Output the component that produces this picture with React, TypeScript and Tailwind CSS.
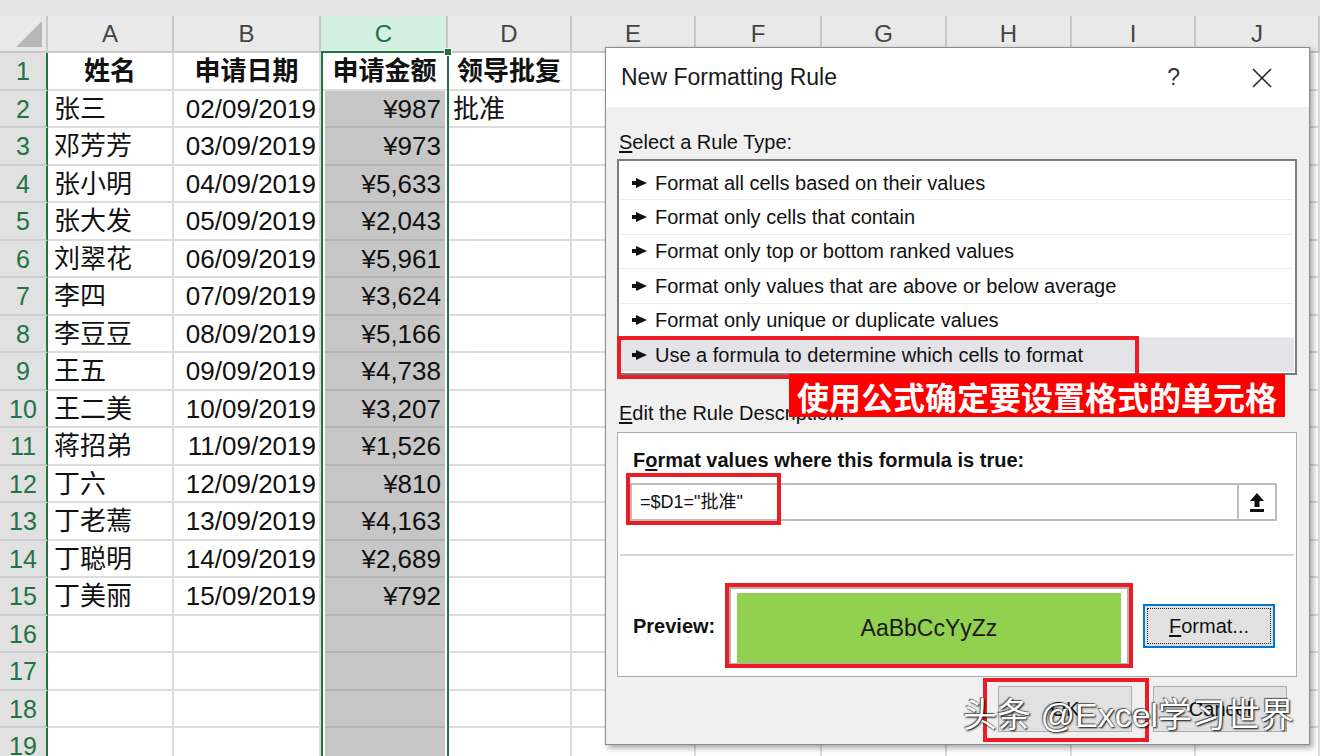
import React from 'react';

const rowsData = [
  ['张三', '02/09/2019', '¥987', '批准'],
  ['邓芳芳', '03/09/2019', '¥973', ''],
  ['张小明', '04/09/2019', '¥5,633', ''],
  ['张大发', '05/09/2019', '¥2,043', ''],
  ['刘翠花', '06/09/2019', '¥5,961', ''],
  ['李四', '07/09/2019', '¥3,624', ''],
  ['李豆豆', '08/09/2019', '¥5,166', ''],
  ['王五', '09/09/2019', '¥4,738', ''],
  ['王二美', '10/09/2019', '¥3,207', ''],
  ['蒋招弟', '11/09/2019', '¥1,526', ''],
  ['丁六', '12/09/2019', '¥810', ''],
  ['丁老蔫', '13/09/2019', '¥4,163', ''],
  ['丁聪明', '14/09/2019', '¥2,689', ''],
  ['丁美丽', '15/09/2019', '¥792', ''],
];

const restCols = ['w-[124px]', 'w-[126px]', 'w-[125px]', 'w-[125px]', 'w-[124px]', 'w-[124px]'];
const restLetters = ['E', 'F', 'G', 'H', 'I', 'J'];

const ruleTypes = [
  'Format all cells based on their values',
  'Format only cells that contain',
  'Format only top or bottom ranked values',
  'Format only values that are above or below average',
  'Format only unique or duplicate values',
  'Use a formula to determine which cells to format',
];

const Arrow = () => (
  <svg width="15" height="10" viewBox="0 0 15 10" className="shrink-0">
    <rect x="0" y="3" width="5" height="4" fill="#111" />
    <polygon points="4,0 15,5 4,10" fill="#111" />
  </svg>
);

const cell = 'h-full flex items-center pt-[2px] border-r-2 border-b-2 border-[#dcdcdc] text-[26px] text-[#111] tabular-nums';

const App = () => {
  return (
    <div className="relative w-[1320px] h-[756px] overflow-hidden bg-white font-['Liberation_Sans','Noto_Sans_CJK_SC',sans-serif]">
      {/* top strip */}
      <div className="h-[16px] bg-[#e6e6e6]" />

      {/* column headers */}
      <div className="flex h-[37px] bg-[#e9e9e9] text-[24px] text-[#444]">
        <div className="w-[48px] h-full relative border-r-2 border-b-2 border-[#c8c8c8]">
          <svg width="26" height="26" viewBox="0 0 26 26" className="absolute right-[4px] bottom-[4px]">
            <polygon points="26,0 26,26 0,26" fill="#b7b7b7" />
          </svg>
        </div>
        <div className="w-[126px] h-full flex items-center justify-center border-r-2 border-b-2 border-[#c8c8c8]">A</div>
        <div className="w-[147px] h-full flex items-center justify-center border-r-2 border-b-2 border-[#c8c8c8]">B</div>
        <div className="w-[127px] h-full flex items-center justify-center bg-[#d3f0e0] text-[#217346] border-r-2 border-[#c8c8c8] border-b-2 border-b-[#217346]">C</div>
        <div className="w-[124px] h-full flex items-center justify-center border-r-2 border-b-2 border-[#c8c8c8]">D</div>
        {restCols.map((w, i) => (
          <div key={i} className={`${w} h-full flex items-center justify-center border-r-2 border-b-2 border-[#c8c8c8]`}>
            {restLetters[i]}
          </div>
        ))}
      </div>

      {/* rows */}
      {Array.from({ length: 19 }).map((_, i) => {
        const r = i + 1;
        const d = r >= 2 && r <= 15 ? rowsData[r - 2] : null;
        return (
          <div key={r} className="flex h-[37.5px]">
            <div className="w-[48px] h-full flex items-center justify-center pt-[2px] bg-[#e1e1e1] text-[#217346] text-[25px] border-r-2 border-r-[#217346] border-b-2 border-b-[#cdcdcd]">
              {r}
            </div>
            <div className={`w-[126px] ${cell} ${r === 1 ? 'justify-center font-bold' : 'pl-[6px]'}`}>
              {r === 1 ? '姓名' : d?.[0]}
            </div>
            <div className={`w-[147px] ${cell} ${r === 1 ? 'justify-center font-bold' : 'justify-end pr-[3px]'}`}>
              {r === 1 ? '申请日期' : d?.[1]}
            </div>
            {r === 1 ? (
              <div className="w-[127px] h-full flex items-center justify-center pt-[2px] bg-white border-b-2 border-[#dcdcdc] text-[26px] font-bold text-[#111]">
                申请金额
              </div>
            ) : (
              <div className="w-[127px] h-full border-l-4 border-l-white border-r-[3px] border-r-white">
                <div className="h-full flex items-center justify-end pt-[2px] pr-[4px] bg-[#c6c6c6] border-b-2 border-[#b3b3b3] text-[26px] text-[#111]">
                  {d?.[2]}
                </div>
              </div>
            )}
            <div className={`w-[124px] ${cell} ${r === 1 ? 'justify-center font-bold' : 'pl-[5px]'}`}>
              {r === 1 ? '领导批复' : d?.[3]}
            </div>
            {restCols.map((w, j) => (
              <div key={j} className={`${w} ${cell}`} />
            ))}
          </div>
        );
      })}

      {/* column C selection border */}
      <div className="absolute left-[321px] top-[51px] w-[128px] h-[720px] border-2 border-[#217346]" />
      <div className="absolute left-[444px] top-[48px] w-[8px] h-[8px] bg-[#217346] border border-white" />

      {/* dialog */}
      <div className="absolute left-[605px] top-[47px] w-[705px] h-[698px] flex flex-col bg-[#f0f0f0] border border-[#8a8a8a] shadow-[3px_3px_6px_rgba(0,0,0,0.35)] text-[20px] text-[#111]">
        <div className="h-[59px] shrink-0 bg-white flex items-center pl-[15px]">
          <span className="text-[23px] text-[#1a1a1a]">New Formatting Rule</span>
          <span className="ml-auto text-[23px] text-[#333]">?</span>
          <svg width="20" height="20" viewBox="0 0 20 20" className="ml-[72px] mr-[37px]">
            <line x1="1" y1="1" x2="19" y2="19" stroke="#222" strokeWidth="1.6" />
            <line x1="19" y1="1" x2="1" y2="19" stroke="#222" strokeWidth="1.6" />
          </svg>
        </div>

        <div className="flex flex-col pl-[11px] pr-[12px]">
          <div className="mt-[23px] h-[24px] leading-[24px] pl-[2px]">
            <span className="underline underline-offset-2">S</span>elect a Rule Type:
          </div>

          <div className="mt-[5px] h-[216px] bg-white border-2 border-[#7d7d7d] pt-[5px] px-[1px]">
            {ruleTypes.map((t, i) => (
              <div
                key={t}
                className={`h-[34.4px] flex items-center gap-[8px] pl-[12px] border-b border-[#ededed] ${
                  i === 5 ? 'bg-[#e4e4e8]' : ''
                }`}
              >
                <Arrow />
                <span>{t}</span>
              </div>
            ))}
          </div>

          <div className="mt-[26px] h-[24px] leading-[24px] pl-[2px]">
            <span className="underline underline-offset-2">E</span>dit the Rule Description:
          </div>

          <div className="mt-[7px] h-[245px] bg-white border border-[#adadad] flex flex-col">
            <div className="mt-[15px] h-[24px] leading-[24px] pl-[15px] font-bold">
              F<span className="underline underline-offset-2">o</span>rmat values where this formula is true:
            </div>
            <div className="mt-[11px] ml-[12px] w-[647px] h-[38px] flex border-2 border-[#bdbdbd]">
              <div className="flex items-center pl-[8px] text-[18px]">=$D1="批准"</div>
              <div className="ml-auto w-[38px] h-full flex items-center justify-center bg-white border-l-2 border-[#bdbdbd]">
                <svg width="18" height="20" viewBox="0 0 18 20">
                  <polygon points="9,1 16,9 11.5,9 11.5,15 6.5,15 6.5,9 2,9" fill="#111" />
                  <rect x="2" y="17" width="14" height="3" fill="#111" />
                </svg>
              </div>
            </div>
            <div className="mt-[33px] mx-[2px] h-[2px] bg-[#d6d6d6]" />
            <div className="mt-[31px] h-[78px] flex items-center pl-[15px]">
              <div className="w-[96px] font-bold">Preview:</div>
              <div className="w-[400px] h-full border-2 border-[#b0b0b0] pt-[4px] px-[6px]">
                <div className="h-full bg-[#92d050] flex items-center justify-center text-[23px] text-[#1a1a1a]">
                  AaBbCcYyZz
                </div>
              </div>
              <div className="ml-[14px] w-[132px] h-[44px] bg-[#e1e1e1] border-2 border-[#0078d7] p-[2px]">
                <div className="w-full h-full border border-dotted border-[#222] flex items-center justify-center">
                  <span className="underline underline-offset-2">F</span>ormat...
                </div>
              </div>
            </div>
          </div>

          <div className="mt-[9px] flex justify-end gap-[21px] pr-[10px]">
            <div className="w-[134px] h-[46px] bg-[#e1e1e1] border border-[#adadad] flex items-center justify-center">OK</div>
            <div className="w-[134px] h-[46px] bg-[#e1e1e1] border border-[#adadad] flex items-center justify-center">Cancel</div>
          </div>
        </div>
      </div>

      {/* annotations */}
      <div className="absolute left-[617px] top-[336px] w-[522px] h-[43px] border-4 border-[#ec1c24]" />
      <div className="absolute left-[789px] top-[374px] w-[496px] h-[43px] bg-[#ff0000] flex items-center justify-center text-white font-bold text-[32px] font-['Noto_Sans_CJK_SC',sans-serif] leading-none">
        使用公式确定要设置格式的单元格
      </div>
      <div className="absolute left-[626px] top-[473px] w-[155px] h-[52px] border-4 border-[#ec1c24]" />
      <div className="absolute left-[725px] top-[583px] w-[408px] h-[85px] border-4 border-[#ec1c24]" />
      <div className="absolute left-[983px] top-[678px] w-[166px] h-[64px] border-4 border-[#ec1c24]" />

      {/* watermark */}
      <div className="absolute left-[963px] top-[694px] text-[34px] leading-[42px] text-white [text-shadow:1px_1px_2px_#000,-1px_-1px_1px_rgba(0,0,0,0.6)] whitespace-nowrap">
        头条 @Excel学习世界
      </div>
    </div>
  );
};

export default App;
